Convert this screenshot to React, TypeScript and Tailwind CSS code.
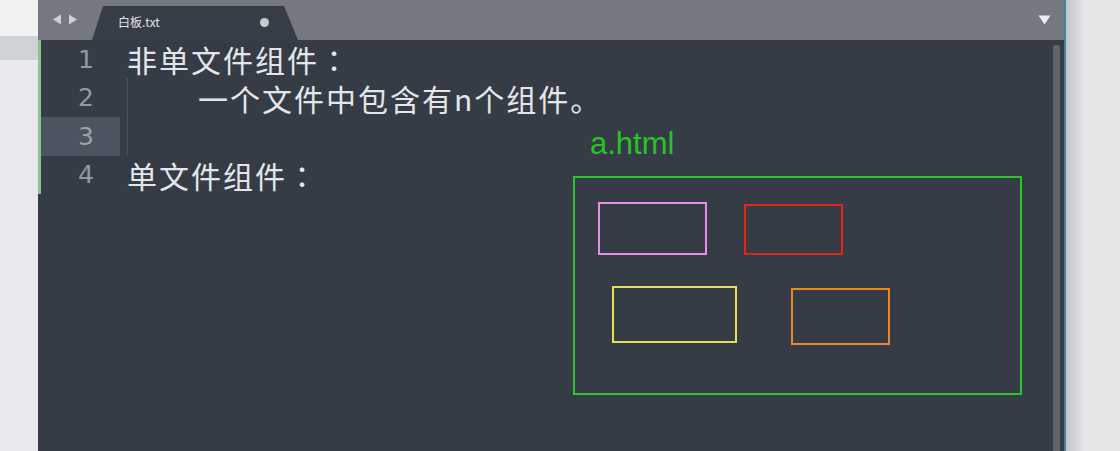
const lines = [
  { n: 1, indent: false, text: '非单文件组件', colon: true, active: false },
  { n: 2, indent: true, text: '一个文件中包含有n个组件。', colon: false, active: false },
  { n: 3, indent: true, text: '', colon: false, active: true },
  { n: 4, indent: false, text: '单文件组件', colon: true, active: false },
];

const boxes = [
  { id: 1, cls: 'left-[23px] top-[24px] w-[109px] h-[53px] border-[#e78ee6]' },
  { id: 2, cls: 'left-[169px] top-[26px] w-[99px] h-[51px] border-[#e3261b]' },
  { id: 3, cls: 'left-[37px] top-[108px] w-[125px] h-[57px] border-[#e9e14b]' },
  { id: 4, cls: 'left-[216px] top-[110px] w-[99px] h-[57px] border-[#e9872b]' },
];

const TitleBar = () => (
  <div className="h-[40px] bg-[#75787e] flex items-end shrink-0">
    {/* nav arrows */}
    <div className="h-full flex items-center gap-[6px] pl-[14px] pb-[1px]">
      <svg width="10" height="11" viewBox="0 0 10 11">
        <path d="M9 0.5 L1 5.5 L9 10.5 Z" fill="#cfd1d5" />
      </svg>
      <svg width="10" height="11" viewBox="0 0 10 11">
        <path d="M1 0.5 L9 5.5 L1 10.5 Z" fill="#cfd1d5" />
      </svg>
    </div>
    {/* tab */}
    <div className="ml-[14px] w-[206px] h-[34px] bg-[#363d47] [clip-path:polygon(11px_0,calc(100%_-_14px)_0,100%_100%,0_100%)] flex items-center pl-[26px] pr-[29px] pb-[2px]">
      <span className="text-[12px] text-[#e2e4e7] font-['Noto_Sans_CJK_SC',sans-serif]">白板.txt</span>
      <span className="ml-auto w-[9px] h-[9px] rounded-full bg-[#c6c9cd]" />
    </div>
    <div className="flex-1" />
    <div className="h-full flex items-center pr-[13px] pb-[1px]">
      <svg width="13" height="10" viewBox="0 0 13 10">
        <path d="M0.5 0.5 L12.5 0.5 L6.5 9.5 Z" fill="#eceef0" />
      </svg>
    </div>
  </div>
);

const Editor = () => (
  <div className="flex-1 flex min-h-0 bg-[#353c46]">
    <div className="flex-1 flex flex-col relative">
      {lines.map(line => (
        <div key={line.n} className="flex h-[38.5px]">
          <div className={`w-[82px] border-l-[3px] border-[#8cc58c] flex items-center justify-end pr-[26px] text-[25px] font-['DejaVu_Sans',sans-serif] ${line.active ? 'bg-[#4b5460] text-[#9ca4ad]' : 'text-[#929aa3]'}`}>
            {line.n}
          </div>
          <div className="flex-1 flex items-center pl-[7px] text-[30px] tracking-[2px] text-[#e4e6ea] font-['Noto_Sans_CJK_SC',sans-serif]">
            {line.indent && <span className="w-[71px] h-full shrink-0 border-l border-dotted border-[#5d646e]" />}
            {line.text && <span className="block leading-[30px]">{line.text}</span>}
            {line.colon && <span className="block leading-[30px] font-['Noto_Sans_CJK_JP',sans-serif]">：</span>}
          </div>
        </div>
      ))}

      {/* hand drawn annotation */}
      <div className="absolute left-[552px] top-[88px] text-[31px] leading-none text-[#28c22a] font-['Liberation_Sans',sans-serif]">
        a.html
      </div>
      <div className="absolute left-[535px] top-[136px] w-[449px] h-[219px] border-2 border-[#2cc42e]">
        {boxes.map(b => (
          <div key={b.id} className={`absolute border-2 ${b.cls}`} />
        ))}
      </div>
    </div>
    {/* scrollbar */}
    <div className="w-[11px] flex justify-start pt-[5px]">
      <div className="w-[7px] h-full rounded-t-[3px] bg-[#5e656e]" />
    </div>
  </div>
);

export default function App() {
  return (
    <div className="flex w-[1120px] h-[451px] overflow-hidden">
      <div className="w-[38px] flex flex-col shrink-0">
        <div className="h-[36px] bg-[#f0f1f3]" />
        <div className="h-[24px] bg-[#ced3d8]" />
        <div className="flex-1 bg-[#e8e9ec]" />
      </div>
      <div className="w-[1028px] shrink-0 flex flex-col border-r-2 border-[#3f7f9e]">
        <TitleBar />
        <Editor />
      </div>
      <div className="flex-1 bg-[linear-gradient(to_right,#c3c4c7,#e5e6e8_18px)]" />
    </div>
  );
}
